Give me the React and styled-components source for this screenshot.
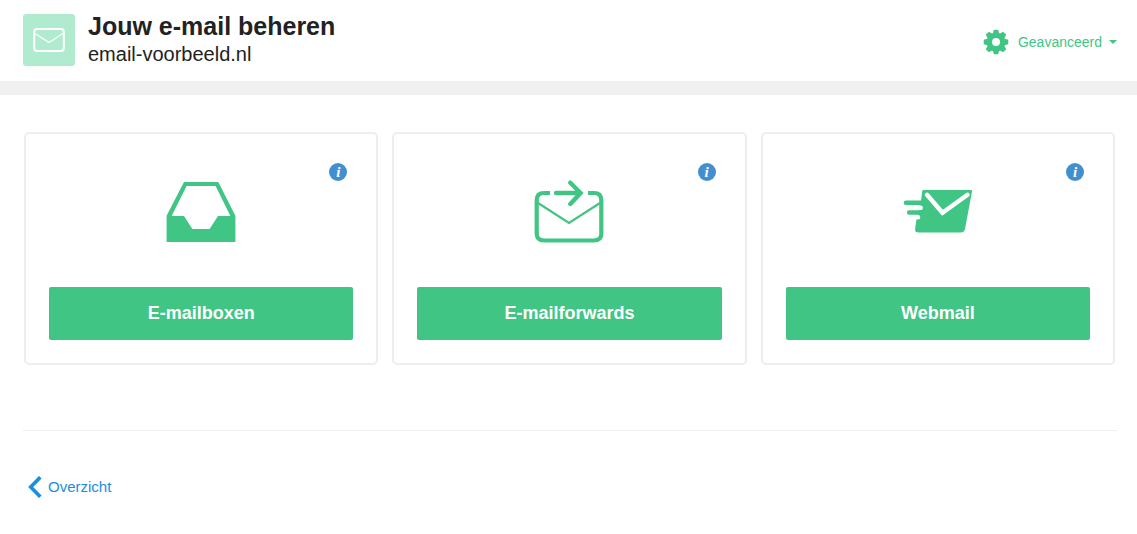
import styled, { createGlobalStyle } from "styled-components";

const GlobalStyle = createGlobalStyle`
  * {
    box-sizing: border-box;
  }
  body {
    margin: 0;
    background-color: #ffffff;
    color: #222222;
    font-family: "Liberation Sans", Arial, sans-serif;
  }
`;

const Header = styled("header")`
  display: flex;
  align-items: flex-start;
  justify-content: space-between;
  padding: 14px 20px 11px 23px;
  border-bottom: 14px solid #f0f0f0;
`;

const Heading = styled("div")`
  display: flex;
  gap: 13px;
`;

const Badge = styled("div")`
  display: flex;
  align-items: center;
  justify-content: center;
  width: 52px;
  height: 52px;
  border-radius: 3px;
  background-color: #b0ebcf;
`;

const Title = styled("h1")`
  margin: 0;
  font-size: 25px;
  line-height: 24px;
`;

const Domain = styled("p")`
  margin: 0;
  font-size: 20px;
  line-height: 32px;
`;

const MenuButton = styled("button")`
  display: flex;
  align-items: center;
  margin-top: 14px;
  padding: 0;
  border: 0;
  background: none;
  color: #41c584;
  font-family: inherit;
  font-size: 14px;
  line-height: 28px;
  cursor: pointer;

  svg {
    margin-right: 9px;
  }

  &::after {
    content: "";
    margin-left: 7px;
    border: 4px solid transparent;
    border-top-color: #41c584;
    border-bottom: 0;
  }
`;

const Cards = styled("main")`
  display: grid;
  grid-template-columns: repeat(3, 1fr);
  gap: 14px;
  padding: 37px 22px 65px 24px;
`;

const Card = styled("section")`
  display: flex;
  flex-direction: column;
  align-items: center;
  padding: 29px 23px 23px;
  border: 2px solid #eeeeee;
  border-radius: 5px;

  > svg {
    margin-top: -1px;
    margin-bottom: 43px;
  }
`;

const InfoButton = styled("button")`
  align-self: flex-end;
  width: 18px;
  height: 18px;
  margin-right: 6px;
  padding: 0;
  border: 0;
  border-radius: 50%;
  background-color: #428fcf;
  color: #ffffff;
  font-family: "Liberation Serif", serif;
  font-size: 15px;
  font-style: italic;
  font-weight: bold;
  line-height: 18px;
  text-align: center;
  cursor: pointer;
`;

const CardLink = styled("a")`
  width: 100%;
  border-radius: 2px;
  background-color: #41c584;
  color: #ffffff;
  font-size: 18px;
  font-weight: bold;
  line-height: 53px;
  text-align: center;
  text-decoration: none;
`;

const Footer = styled("footer")`
  margin: 0 20px 0 23px;
  padding: 42px 5px;
  border-top: 1px solid #eeeeee;
`;

const BackLink = styled("a")`
  display: inline-flex;
  align-items: center;
  gap: 6px;
  color: #1a8fdf;
  font-size: 15px;
  line-height: 28px;
  text-decoration: none;
`;

const EnvelopeIcon = () => (
  <svg width="32" height="24" viewBox="0 0 32 24" fill="none" stroke="#fff">
    <rect x="1.2" y="1" width="29.6" height="22" rx="3" strokeWidth="2" />
    <path d="M2 5.5 16 14.5 30 5.5" strokeWidth="1.2" />
  </svg>
);

const GearIcon = () => (
  <svg width="26" height="26" viewBox="-13 -13 26 26" fill="#41c584">
    <circle r="6.7" fill="none" stroke="#41c584" strokeWidth="5.4" />
    {[0, 45, 90, 135, 180, 225, 270, 315].map((angle) => (
      <path
        key={angle}
        d="M-3.2-8 -2.4-11.6Q-2.2-12.3-1.5-12.3H1.5Q2.2-12.3 2.4-11.6L3.2-8Z"
        transform={`rotate(${angle})`}
      />
    ))}
  </svg>
);

const InboxIcon = () => (
  <svg width="70" height="64" viewBox="0 0 70 64" fill="#41c584">
    <path
      fillRule="evenodd"
      d="M18 2H52.3L69.4 35.7V62H.6V35.7ZM20.6 6 5.6 36H18L26.4 49H43.6L52 36H64.4L49.6 6Z"
    />
  </svg>
);

const ForwardIcon = () => (
  <svg width="70" height="64" viewBox="0 0 70 64" fill="none" stroke="#41c584">
    <path
      d="M16 13H10Q2.7 13 2.7 20.3V53.5Q2.7 60.5 10 60.5H60Q67.3 60.5 67.3 53.5V20.3Q67.3 13 60 13H54"
      strokeWidth="4.2"
    />
    <path d="M4 23 35 43 66 23" strokeWidth="2.2" />
    <path d="M22 13H46M36.3 2.7 46.6 13 36.3 24" strokeWidth="4.4" strokeLinecap="round" />
  </svg>
);

const WebmailIcon = () => (
  <svg width="70" height="64" viewBox="0 0 70 64" strokeLinecap="round">
    <path
      fill="#41c584"
      d="M20.3 10H68Q69.3 10 69 11.4L62 49Q61.2 52.6 57.8 52.6H15.4Q11.8 52.6 12.1 49L13.5 38.5 18 21 19.2 11.2Q19.4 10 20.3 10Z"
    />
    <path d="M3 22.8H20M6.2 32.5H18" stroke="#41c584" strokeWidth="4.6" />
    <path d="M8 27.7H17.6M8 37.3H15" stroke="#fff" strokeWidth="4.6" />
    <path d="M24 14.8 39.5 32.8 64.5 14.8" fill="none" stroke="#fff" strokeWidth="4.4" />
  </svg>
);

const cards = [
  { title: "E-mailboxen", href: "#mailboxen", Icon: InboxIcon },
  { title: "E-mailforwards", href: "#forwards", Icon: ForwardIcon },
  { title: "Webmail", href: "#webmail", Icon: WebmailIcon },
];

function App() {
  return (
    <>
      <GlobalStyle />
      <Header>
        <Heading>
          <Badge>
            <EnvelopeIcon />
          </Badge>
          <div>
            <Title>Jouw e-mail beheren</Title>
            <Domain>email-voorbeeld.nl</Domain>
          </div>
        </Heading>
        <MenuButton type="button" aria-haspopup="true">
          <GearIcon />
          Geavanceerd
        </MenuButton>
      </Header>
      <Cards>
        {cards.map(({ title, href, Icon }) => (
          <Card key={title}>
            <InfoButton type="button">i</InfoButton>
            <Icon />
            <CardLink href={href}>{title}</CardLink>
          </Card>
        ))}
      </Cards>
      <Footer>
        <BackLink href="#overzicht">
          <svg width="14" height="22" viewBox="0 0 14 22" fill="none">
            <path d="M12.3 1.2 2.7 11 12.3 20.8" stroke="#1a8fdf" strokeWidth="3.6" />
          </svg>
          Overzicht
        </BackLink>
      </Footer>
    </>
  );
}

export default App;
